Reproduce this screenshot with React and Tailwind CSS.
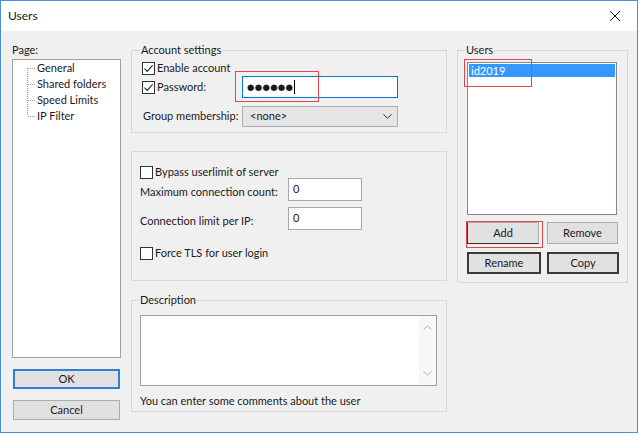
import React from "react";

function CheckBox({ checked, label, className = "" }) {
  return (
    <div className={"flex items-center h-[16px] " + className}>
      <span className="w-[13px] h-[13px] border border-[#333333] bg-white flex items-center justify-center shrink-0">
        {checked && (
          <svg width="11" height="11" viewBox="0 0 11 11">
            <path d="M1.5 5.6 L4.2 8.4 L9.6 2.4" fill="none" stroke="#222" strokeWidth="1.1" />
          </svg>
        )}
      </span>
      <span className="ml-[2px] whitespace-nowrap">{label}</span>
    </div>
  );
}

function TreeRow({ label, first, last }) {
  return (
    <div className="flex items-center h-[16px]">
      <svg width="24" height="16" className="shrink-0">
        <line x1="14.5" y1={first ? 8 : 0} x2="14.5" y2={last ? 8 : 16} stroke="#a0a0a0" strokeDasharray="1 1" />
        <line x1="15" y1="8.5" x2="23" y2="8.5" stroke="#a0a0a0" strokeDasharray="1 1" />
      </svg>
      <span className="whitespace-nowrap">{label}</span>
    </div>
  );
}

function Chevron({ up, color = "#333" }) {
  return (
    <svg width="9" height="5" viewBox="0 0 9 5">
      <path d={up ? "M0.5 4.5 L4.5 0.8 L8.5 4.5" : "M0.5 0.5 L4.5 4.2 L8.5 0.5"} fill="none" stroke={color} strokeWidth="1" />
    </svg>
  );
}

export default function App() {
  const treeItems = ["General", "Shared folders", "Speed Limits", "IP Filter"];

  return (
    <div className="w-[640px] h-[435px] bg-white font-['Lato',sans-serif] text-[11px] text-[#1a1a1a]">
      <div className="w-[638px] h-[433px] border border-[#4a90d9] flex flex-col">
        {/* title bar */}
        <div className="h-[30px] bg-white flex items-center justify-between pl-[7px] pr-[17px] shrink-0">
          <span className="text-[12px]">Users</span>
          <svg width="10" height="10" viewBox="0 0 10 10">
            <path d="M0 0 L10 10 M10 0 L0 10" stroke="#111" strokeWidth="1" />
          </svg>
        </div>

        <div className="flex-1 bg-[#f0f0f0] flex pt-[11px] pl-[11px]">
          {/* left column */}
          <div className="w-[109px] flex flex-col shrink-0">
            <div className="h-[16px] leading-[16px]">Page:</div>
            <div className="mt-[1px] h-[299px] border border-[#a0a0a0] bg-white">
              {treeItems.map((t, i) => (
                <TreeRow key={t} label={t} first={i === 0} last={i === treeItems.length - 1} />
              ))}
            </div>
            <button className="mt-[11px] mx-[1px] h-[20px] border-2 border-[#2f7fd6] bg-[#e1e1e1] flex items-center justify-center">
              OK
            </button>
            <button className="mt-[11px] mx-[1px] h-[20px] border border-[#adadad] bg-[#e1e1e1] flex items-center justify-center">
              Cancel
            </button>
          </div>

          {/* middle column */}
          <div className="ml-[10px] w-[316px] flex flex-col shrink-0">
            <fieldset className="border border-[#d8d8d8] pl-[10px] pr-[10px] pb-[5px]">
              <legend className="ml-[-2px] px-[1px] h-[16px] leading-[16px]">Account settings</legend>
              <div className="pt-[2px]">
                <CheckBox checked label="Enable account" />
                <div className="flex items-center h-[22px]">
                  <div className="w-[100px]">
                    <CheckBox checked label="Password:" />
                  </div>
                  <div className="relative w-[156px] h-[22px] border border-[#0078d7] bg-white flex items-center pl-[4px]">
                    <span className="font-['DejaVu_Sans',sans-serif] text-[8.5px] tracking-[0.3px] leading-none">●●●●●●</span>
                    <span className="ml-[1px] w-[1px] h-[14px] bg-black"></span>
                    <div className="absolute left-[-8px] top-[-6px] w-[84px] h-[31px] border-[1.5px] border-[#e0474c]"></div>
                  </div>
                </div>
                <div className="flex items-center h-[21px] mt-[8px]">
                  <div className="w-[100px] pl-[1px] whitespace-nowrap">Group membership:</div>
                  <div className="w-[156px] h-[21px] border border-[#acacac] bg-[#e5e5e5] flex items-center justify-between pl-[7px] pr-[5px]">
                    <span>&lt;none&gt;</span>
                    <Chevron />
                  </div>
                </div>
              </div>
            </fieldset>

            <fieldset className="mt-[18px] border border-[#d8d8d8] pl-[8px] pt-[12px] pb-[19px]">
              <CheckBox label="Bypass userlimit of server" />
              <div className="flex mt-[-2px]">
                <div className="w-[148px] pt-[6px] leading-[16px] whitespace-nowrap">Maximum connection count:</div>
                <div className="w-[74px] h-[23px] border border-[#a8a8a8] bg-white pl-[4px] pt-[2px] leading-[16px]">0</div>
              </div>
              <div className="flex mt-[6px]">
                <div className="w-[148px] pt-[6px] leading-[16px] whitespace-nowrap">Connection limit per IP:</div>
                <div className="w-[74px] h-[23px] border border-[#a8a8a8] bg-white pl-[4px] pt-[2px] leading-[16px]">0</div>
              </div>
              <CheckBox label="Force TLS for user login" className="mt-[15px]" />
            </fieldset>

            <fieldset className="mt-[11px] border border-[#d8d8d8] pl-[8px] pb-[2px]">
              <legend className="ml-[-1px] px-[1px] h-[16px] leading-[16px]">Description</legend>
              <div className="mt-[7px] w-[297px] h-[71px] border border-[#a0a0a0] bg-white flex">
                <div className="flex-1"></div>
                <div className="w-[17px] bg-[#f7f7f7] flex flex-col items-center justify-between py-[9px]">
                  <Chevron up color="#b0b0b0" />
                  <Chevron color="#b0b0b0" />
                </div>
              </div>
              <div className="mt-[7px] h-[16px] leading-[16px] whitespace-nowrap">You can enter some comments about the user</div>
            </fieldset>
          </div>

          {/* right column */}
          <div className="ml-[10px] w-[171px] shrink-0">
            <fieldset className="border border-[#d8d8d8] pl-[9px] pb-[8px]">
              <legend className="ml-[-2px] px-[1px] h-[16px] leading-[16px]">Users</legend>
              <div className="mt-[4px] w-[150px] h-[153px] border border-[#828790] bg-white p-[1px]">
                <div className="relative h-[13px] bg-[#3399ff] text-white leading-[13px] pl-[2px]">
                  id2019
                  <div className="absolute left-[-5px] top-[-5px] w-[68px] h-[28px] border-[1.5px] border-[#e0474c]"></div>
                </div>
              </div>
              <div className="mt-[7px] flex gap-[8px]">
                <div className="relative w-[72px] h-[22px]">
                  <button className="w-full h-full border border-[#adadad] border-l-[#333] border-b-[#333] bg-[#e1e1e1] flex items-center justify-center">
                    Add
                  </button>
                  <div className="absolute left-[-1px] top-[-1px] w-[77px] h-[27px] border-[1.5px] border-[#e0474c]"></div>
                </div>
                <button className="w-[71px] h-[22px] border border-[#adadad] bg-[#e1e1e1] flex items-center justify-center">
                  Remove
                </button>
              </div>
              <div className="mt-[8px] flex gap-[6px]">
                <button className="w-[74px] h-[22px] border-2 border-[#3a3a3a] bg-[#e1e1e1] flex items-center justify-center">
                  Rename
                </button>
                <button className="w-[72px] h-[22px] border-2 border-[#3a3a3a] bg-[#e1e1e1] flex items-center justify-center">
                  Copy
                </button>
              </div>
            </fieldset>
          </div>
        </div>
      </div>
    </div>
  );
}
